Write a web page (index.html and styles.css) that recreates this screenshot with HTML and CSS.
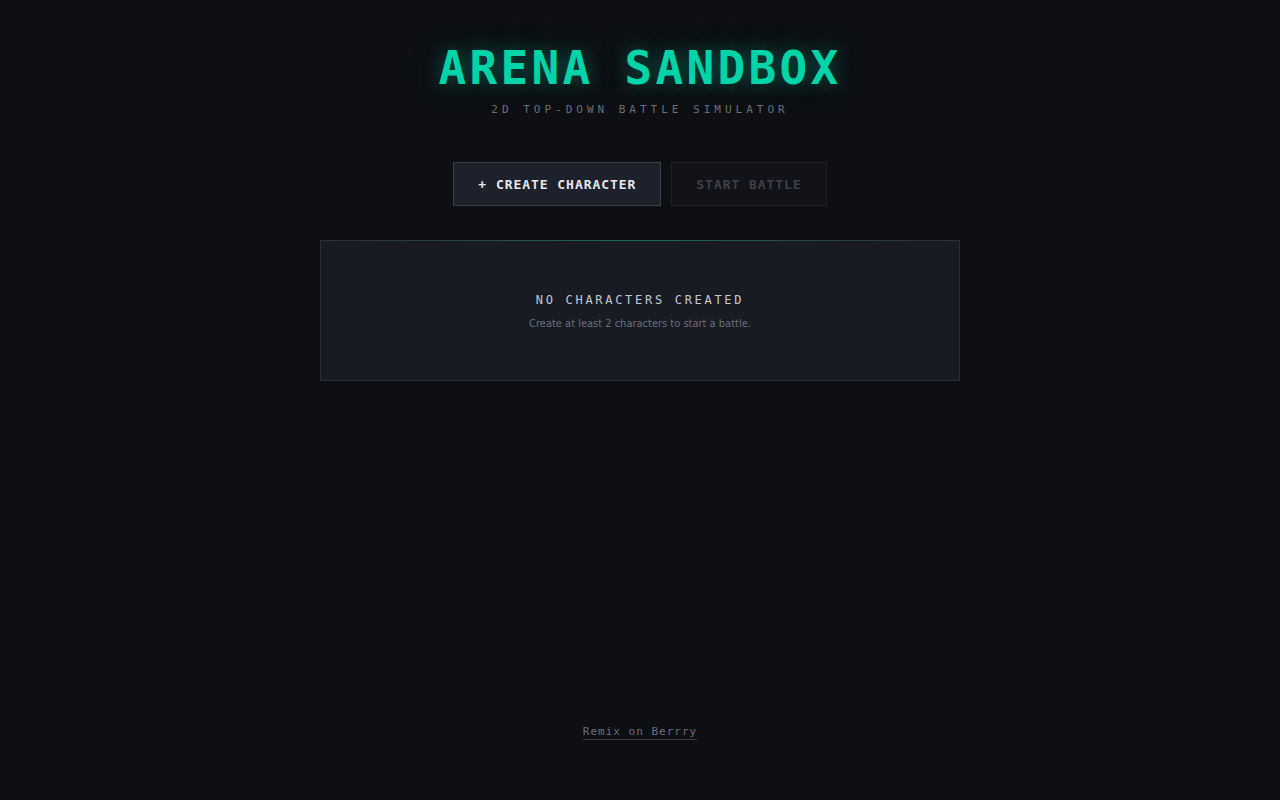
FILE: index.html
```html
<!DOCTYPE html>
<html lang="en">
<head>
<meta charset="utf-8">
<title>Arena Sandbox</title>
<link rel="stylesheet" href="styles.css">
</head>
<body>
<div class="page">
  <header class="header">
    <h1 class="title">ARENA SANDBOX</h1>
    <p class="subtitle">2D TOP-DOWN BATTLE SIMULATOR</p>
  </header>

  <div class="actions">
    <button class="btn btn-primary" type="button">+ CREATE CHARACTER</button>
    <button class="btn btn-disabled" type="button" disabled>START BATTLE</button>
  </div>

  <section class="roster">
    <h2 class="empty-title">NO CHARACTERS CREATED</h2>
    <p class="empty-text">Create at least 2 characters to start a battle.</p>
  </section>

  <footer class="footer">
    <a class="remix" href="#">Remix on Berrry</a>
  </footer>
</div>
</body>
</html>
```

FILE: styles.css
```css
* { box-sizing: border-box; }

html, body {
  margin: 0;
  padding: 0;
  background: #0d0f13;
}

body {
  font-family: "DejaVu Sans Mono", "Liberation Mono", monospace;
  color: #c5c8cf;
}

.page {
  min-height: 100vh;
  display: flex;
  flex-direction: column;
  align-items: center;
}

.header {
  display: flex;
  flex-direction: column;
  align-items: center;
  padding-top: 40px;
}

.title {
  margin: 0;
  font-size: 46px;
  line-height: 56px;
  font-weight: bold;
  letter-spacing: 3.3px;
  color: #00d4a8;
  text-shadow: 0 0 18px rgba(0, 212, 168, 0.35), 0 0 40px rgba(0, 212, 168, 0.15);
}

.subtitle {
  margin: 6px 0 0;
  font-size: 11px;
  line-height: 16px;
  letter-spacing: 4px;
  color: #6b6f7a;
}

.actions {
  display: flex;
  gap: 10px;
  margin-top: 44px;
}

.btn {
  height: 44px;
  padding: 0 24px;
  font-family: inherit;
  font-size: 13px;
  font-weight: bold;
  letter-spacing: 0.95px;
  border: 1px solid;
  cursor: pointer;
}

.btn-primary {
  background: #1c212b;
  border-color: #3a3f48;
  color: #e6e8ec;
}

.btn-disabled {
  background: #111318;
  border-color: #1f2229;
  color: #3d4049;
  cursor: default;
}

.roster {
  position: relative;
  width: 640px;
  margin-top: 34px;
  padding: 51px 0 48px;
  background: #181b23;
  border: 1px solid #2a2e37;
  text-align: center;
}

.roster::before {
  content: "";
  position: absolute;
  left: 0;
  right: 0;
  top: -1px;
  height: 1px;
  background: linear-gradient(90deg, transparent, rgba(0, 212, 168, 0.35) 50%, transparent);
}

.empty-title {
  margin: 0;
  font-size: 12px;
  line-height: 16px;
  font-weight: normal;
  letter-spacing: 2.7px;
  color: #c5c8cf;
}

.empty-text {
  margin: 8px 0 0;
  font-family: "DejaVu Sans Condensed", "Liberation Sans Narrow", "Liberation Sans", sans-serif;
  font-size: 11px;
  line-height: 16px;
  color: #6b6f7a;
}

.footer {
  margin-top: auto;
  padding-bottom: 60px;
}

.remix {
  font-size: 11px;
  line-height: 16px;
  letter-spacing: 1px;
  color: #6b6f7a;
  text-decoration: none;
  border-bottom: 1px solid #3a3d46;
  padding-bottom: 1px;
}
```
